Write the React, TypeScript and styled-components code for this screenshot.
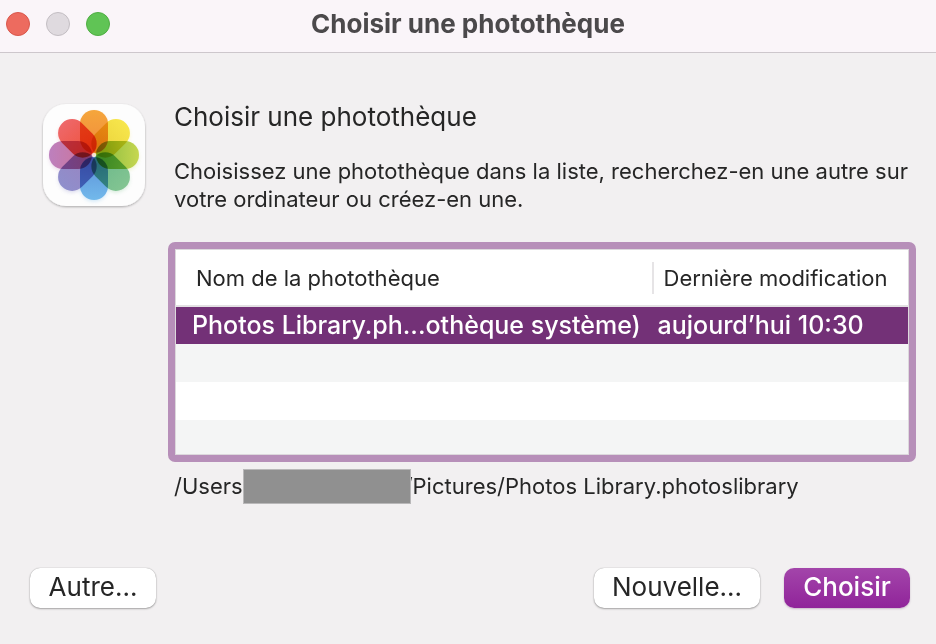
import React from "react";
import styled, { createGlobalStyle, css } from "styled-components";

const GlobalStyle = createGlobalStyle`
  *, *::before, *::after { box-sizing: border-box; }
  body {
    margin: 0;
    background: #f2f0f1;
    color: #262626;
    font-family: Inter, "Liberation Sans", sans-serif;
  }
  button { font-family: inherit; }
`;

const Dialog = styled.main`
  min-height: 100vh;
  display: flex;
  flex-direction: column;
`;

const TitleBar = styled.header`
  display: grid;
  grid-template-columns: 1fr auto 1fr;
  align-items: center;
  height: 53px;
  padding: 0 6px 4px;
  background: #faf5f9;
  border-bottom: 1px solid #cdc7cc;
`;

const WindowControls = styled.div`
  display: flex;
  gap: 16px;
`;

const ControlDot = styled.button<{ $fill: string; $edge: string }>`
  width: 24px;
  height: 24px;
  padding: 0;
  border: 1px solid ${(p) => p.$edge};
  border-radius: 50%;
  background: ${(p) => p.$fill};
`;

const WindowTitle = styled.h1`
  margin: 0;
  font-size: 26px;
  line-height: 32px;
  font-weight: 700;
  color: #4b494b;
`;

const Content = styled.section`
  display: grid;
  grid-template-columns: 104px minmax(0, 1fr);
  column-gap: 28px;
  padding: 48px 20px 0 42px;
`;

const AppIcon = styled.svg`
  display: block;
  width: 104px;
  height: 108px;
  margin-top: 3px;
  overflow: visible;
`;

const Petal = styled.rect`
  mix-blend-mode: multiply;
`;

const Flower = styled.g`
  isolation: isolate;
`;

const Heading = styled.h2`
  margin: 0 0 24px;
  font-size: 26px;
  line-height: 32px;
  font-weight: 400;
`;

const Message = styled.p`
  margin: 0;
  font-size: 22px;
  line-height: 28px;
`;

const ListFrame = styled.div`
  grid-column: 2;
  margin: 29px 0 0 -6px;
  border: 7px solid #b78fb9;
  border-radius: 7px;
  background: #fff;
`;

const LibraryTable = styled.table`
  width: 100%;
  table-layout: fixed;
  border-collapse: collapse;
  border: 1px solid #dcd8dc;
`;

const NameColumn = styled.col``;

const DateColumn = styled.col`
  width: 257px;
`;

const HeaderCell = styled.th<{ $divided?: boolean }>`
  height: 56px;
  padding: 2px 0 0 ${(p) => (p.$divided ? 0 : 20)}px;
  border-bottom: 2px solid #e3e1e3;
  font-size: 22px;
  line-height: 32px;
  font-weight: 400;
  text-align: left;
  white-space: nowrap;
`;

const DividedLabel = styled.div`
  padding-left: 10px;
  border-left: 2px solid #e6e4e6;
`;

const Row = styled.tr<{ $selected?: boolean; $striped?: boolean; $short?: boolean }>`
  height: ${(p) => (p.$short ? 35 : 38)}px;
  background: ${(p) => (p.$striped ? "#f4f5f5" : "#fff")};
  ${(p) =>
    p.$selected &&
    css`
      background: #733177;
      color: #fff;
    `}
`;

const Cell = styled.td<{ $indent: number }>`
  padding: 0 0 0 ${(p) => p.$indent}px;
  font-size: 25px;
  line-height: 36px;
  font-weight: 500;
  white-space: nowrap;
`;

const LibraryPath = styled.p`
  grid-column: 2;
  display: flex;
  align-items: center;
  margin: 6px 0 0;
  font-size: 22px;
  line-height: 36px;
  white-space: nowrap;
`;

const Redaction = styled.span`
  width: 168px;
  height: 35px;
  margin-right: -6px;
  z-index: 1;
  background: #909090;
  border: 1px solid #b9b8b9;
`;

const Actions = styled.footer`
  display: flex;
  gap: 24px;
  margin-top: auto;
  padding: 0 26px 36px 30px;
`;

const ActionButton = styled.button<{ $primary?: boolean; $wide?: boolean; $leading?: boolean }>`
  width: ${(p) => (p.$wide ? 166 : 126)}px;
  height: 40px;
  margin-right: ${(p) => (p.$leading ? "auto" : "0")};
  padding: 0 0 2px;
  border: 0;
  border-radius: 10px;
  background: ${(p) => (p.$primary ? "linear-gradient(#a345aa, #90249a)" : "#fff")};
  color: ${(p) => (p.$primary ? "#fff" : "#262626")};
  box-shadow: ${(p) =>
    p.$primary ? "0 1px 2px rgba(80, 20, 85, 0.25)" : "0 0 1px rgba(0, 0, 0, 0.35), 0 1px 2px rgba(0, 0, 0, 0.3)"};
  font-size: 26px;
  line-height: 38px;
  font-weight: ${(p) => (p.$primary ? 500 : 400)};
`;

const petals = [
  { angle: 0, inner: "#f08a3c", outer: "#f5a63c" },
  { angle: 45, inner: "#e8cf38", outer: "#f7e64c" },
  { angle: 90, inner: "#83b83e", outer: "#c6d750" },
  { angle: 135, inner: "#69b68a", outer: "#83c592" },
  { angle: 180, inner: "#5b8fd8", outer: "#72b9eb" },
  { angle: 225, inner: "#9a83c0", outer: "#8f8fcc" },
  { angle: 270, inner: "#cf7394", outer: "#bd80be" },
  { angle: 315, inner: "#ef5038", outer: "#ee686a" },
];

function PhotosIcon() {
  return (
    <AppIcon viewBox="0 0 104 108" role="img" aria-label="Photos">
      <defs>
        <filter id="tile-shadow" x="-10%" y="-10%" width="120%" height="125%">
          <feDropShadow dx="0" dy="1" stdDeviation="1" floodColor="#000" floodOpacity="0.3" />
        </filter>
        <filter id="petal-shadow" x="-20%" y="-20%" width="140%" height="150%">
          <feGaussianBlur stdDeviation="2" />
        </filter>
        {petals.map((p) => (
          <linearGradient key={p.angle} id={`petal-${p.angle}`} x1="0" y1="0" x2="0" y2="1">
            <stop offset="0" stopColor={p.outer} />
            <stop offset="1" stopColor={p.inner} />
          </linearGradient>
        ))}
      </defs>
      <rect x="1" y="0" width="102" height="102" rx="23" fill="#fdfdfd" filter="url(#tile-shadow)" />
      <g transform="translate(52 53)" filter="url(#petal-shadow)" opacity="0.4">
        {petals.map((p) => (
          <rect key={p.angle} x="-13" y="-44" width="26" height="42" rx="13" fill={p.outer} transform={`rotate(${p.angle})`} />
        ))}
      </g>
      <Flower transform="translate(52 51)">
        {petals.map((p) => (
          <Petal
            key={p.angle}
            x="-14"
            y="-45"
            width="28"
            height="43"
            rx="14"
            fill={`url(#petal-${p.angle})`}
            transform={`rotate(${p.angle})`}
          />
        ))}
      </Flower>
    </AppIcon>
  );
}

export default function App() {
  return (
    <Dialog>
      <GlobalStyle />
      <TitleBar>
        <WindowControls>
          <ControlDot type="button" aria-label="Fermer" $fill="#ed6b5f" $edge="#d9574c" />
          <ControlDot type="button" aria-label="Réduire" $fill="#dfdadf" $edge="#c3bec3" />
          <ControlDot type="button" aria-label="Agrandir" $fill="#60c455" $edge="#4fae43" />
        </WindowControls>
        <WindowTitle>Choisir une photothèque</WindowTitle>
      </TitleBar>

      <Content>
        <PhotosIcon />
        <div>
          <Heading>Choisir une photothèque</Heading>
          <Message>
            Choisissez une photothèque dans la liste, recherchez-en une autre sur votre ordinateur ou créez-en une.
          </Message>
        </div>

        <ListFrame>
          <LibraryTable aria-label="Photothèques">
            <colgroup>
              <NameColumn />
              <DateColumn />
            </colgroup>
            <thead>
              <tr>
                <HeaderCell scope="col">Nom de la photothèque</HeaderCell>
                <HeaderCell scope="col" $divided>
                  <DividedLabel>Dernière modification</DividedLabel>
                </HeaderCell>
              </tr>
            </thead>
            <tbody>
              <Row $selected aria-selected="true">
                <Cell $indent={16}>Photos Library.ph...othèque système)</Cell>
                <Cell $indent={6}>aujourd’hui 10:30</Cell>
              </Row>
              <Row $striped>
                <Cell $indent={16} />
                <Cell $indent={6} />
              </Row>
              <Row>
                <Cell $indent={16} />
                <Cell $indent={6} />
              </Row>
              <Row $striped $short>
                <Cell $indent={16} />
                <Cell $indent={6} />
              </Row>
            </tbody>
          </LibraryTable>
        </ListFrame>

        <LibraryPath>
          <span>/Users</span>
          <Redaction />
          <span>/Pictures/Photos Library.photoslibrary</span>
        </LibraryPath>
      </Content>

      <Actions>
        <ActionButton type="button" $leading>
          Autre...
        </ActionButton>
        <ActionButton type="button" $wide>
          Nouvelle...
        </ActionButton>
        <ActionButton type="button" $primary>
          Choisir
        </ActionButton>
      </Actions>
    </Dialog>
  );
}
